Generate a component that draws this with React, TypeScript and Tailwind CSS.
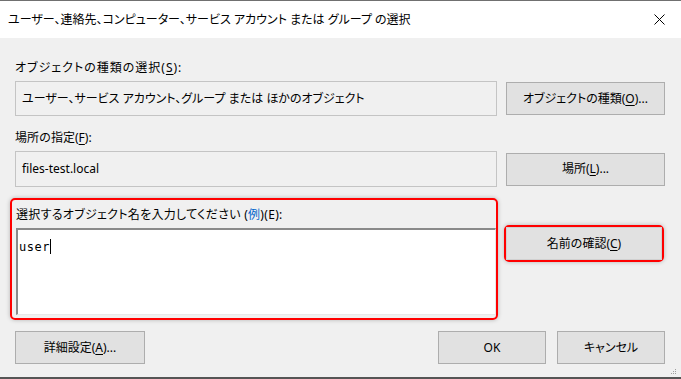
import React from 'react';

// Botón clásico de diálogo de Windows
const DlgButton: React.FC<{ children: React.ReactNode; className?: string }> = ({ children, className = '' }) => (
  <button
    type="button"
    className={`h-[33px] bg-[#e1e1e1] border border-[#adadad] text-[12px] text-black flex items-center justify-center ${className}`}
  >
    {children}
  </button>
);

const U: React.FC<{ children: React.ReactNode }> = ({ children }) => <span className="underline underline-offset-2">{children}</span>;

export default function App() {
  return (
    <div className="w-[681px] h-[379px] bg-[#f0f0f0] flex flex-col border-t border-[#707070] border-b-2 border-b-[#555555] font-['Noto_Sans','Noto_Sans_CJK_JP',sans-serif] [font-feature-settings:'palt'] overflow-hidden">
      {/* Barra de título */}
      <div className="h-[37px] bg-white flex items-center justify-between pl-[8px] pr-[16px] shrink-0">
        <span className="text-[12px] text-black">ユーザー、連絡先、コンピューター、サービス アカウント または グループ の選択</span>
        <svg width="11" height="11" viewBox="0 0 11 11" className="text-black">
          <path d="M0.5 0.5 L10.5 10.5 M10.5 0.5 L0.5 10.5" stroke="currentColor" strokeWidth="1" />
        </svg>
      </div>

      {/* Cuerpo */}
      <div className="flex flex-col pl-[15px] relative flex-1">
        <div className="mt-[22px] text-[12px] leading-[16px] text-black tracking-[1px]">
          オブジェクトの種類の選択(<U>S</U>):
        </div>
        <div className="mt-[5px] flex items-center gap-[9px]">
          <div className="w-[482px] h-[35px] border border-[#c4c4c4] bg-[#f0f0f0] flex items-center pl-[6px] text-[12px] text-black">
            ユーザー、サービス アカウント、グループ または ほかのオブジェクト
          </div>
          <DlgButton className="w-[159px]">
            オブジェクトの種類(<U>O</U>)...
          </DlgButton>
        </div>

        <div className="mt-[14px] text-[12px] leading-[16px] text-black [font-feature-settings:normal]">
          場所の指定(<U>F</U>):
        </div>
        <div className="mt-[5px] flex items-center gap-[9px]">
          <div className="w-[482px] h-[36px] border border-[#c4c4c4] bg-[#f0f0f0] flex items-center pl-[6px] text-[12px] text-black">
            files-test.local
          </div>
          <DlgButton className="w-[159px]">
            場所(<U>L</U>)...
          </DlgButton>
        </div>

        {/* Zona resaltada en rojo */}
        <div className="mt-[11px] flex items-start">
          <div className="ml-[-5px] w-[488px] h-[122px] border-2 border-[#ff0000] rounded-[5px] pl-[4px] pt-[7px] shadow-[0_0_4px_rgba(0,0,0,0.25)] flex flex-col">
            <div className="text-[12px] leading-[16px] text-black tracking-[0.3px]">
              選択するオブジェクト名を入力してください (<span className="text-[#0066cc]">例</span>)(E):
            </div>
            <div className="mt-[5px] w-[480px] h-[87px] bg-white border-t-2 border-l-2 border-[#8a8a8a] border-r border-b border-r-[#e8e8e8] border-b-[#e8e8e8] pl-[1px] pt-[3px]">
              <span className="font-['DejaVu_Sans_Mono',monospace] text-[12px] tracking-[0.5px] text-black">user</span>
              <span className="inline-block w-[1px] h-[15px] bg-black align-[-3px]" />
            </div>
          </div>
          <div className="ml-[6px] mt-[27px] border-2 border-[#ff0000] rounded-[5px] shadow-[0_0_4px_rgba(0,0,0,0.25)]">
            <DlgButton className="w-[156px] h-[32px] border-[#d0d0d0]">
              名前の確認(<U>C</U>)
            </DlgButton>
          </div>
        </div>

        {/* Botones inferiores */}
        <div className="mt-[11px] flex items-center">
          <DlgButton className="w-[130px]">
            詳細設定(<U>A</U>)...
          </DlgButton>
          <div className="flex-1" />
          <DlgButton className="w-[108px] border-[#0078d7]">OK</DlgButton>
          <DlgButton className="w-[108px] ml-[11px] mr-[16px]">キャンセル</DlgButton>
        </div>

        {/* Agarre de redimensionado */}
        <svg width="7" height="7" viewBox="0 0 7 7" className="absolute right-[4px] bottom-[2px]">
          <rect x="5" y="1" width="1" height="1" fill="#a0a0a0" />
          <rect x="3" y="3" width="1" height="1" fill="#a0a0a0" />
          <rect x="5" y="3" width="1" height="1" fill="#a0a0a0" />
          <rect x="1" y="5" width="1" height="1" fill="#a0a0a0" />
          <rect x="3" y="5" width="1" height="1" fill="#a0a0a0" />
          <rect x="5" y="5" width="1" height="1" fill="#a0a0a0" />
        </svg>
      </div>
    </div>
  );
}
